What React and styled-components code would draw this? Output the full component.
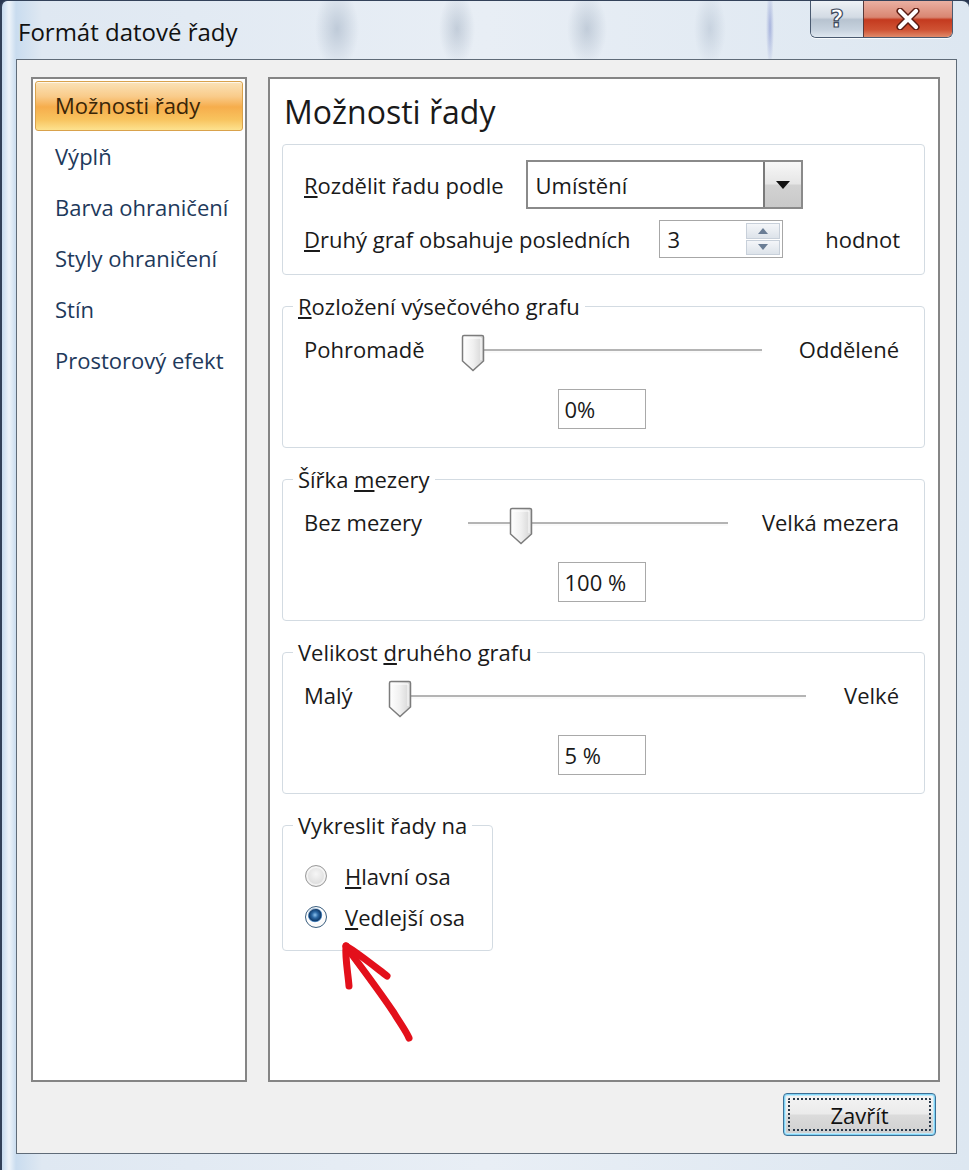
import React from 'react';
import styled, { createGlobalStyle } from 'styled-components';

const Global = createGlobalStyle`
  html, body { margin: 0; padding: 0; }
  body {
    width: 969px; height: 1170px; overflow: hidden;
    font-family: "Open Sans", "Noto Sans", "DejaVu Sans", sans-serif;
    background: #2a3852;
  }
  * { box-sizing: border-box; }
`;

const Window = styled.div`
  position: relative;
  width: 969px;
  height: 1170px;
  display: flex;
  flex-direction: column;
  padding: 0 12px 16px 14px;
  border-left: 2px solid #33425a;
  border-top: 1px solid #33425a;
  border-radius: 7px 7px 0 0;
  background:
    radial-gradient(ellipse 22px 40px at 335px 28px, rgba(120,140,165,.35), transparent),
    radial-gradient(ellipse 18px 36px at 455px 28px, rgba(110,130,155,.3), transparent),
    radial-gradient(ellipse 20px 36px at 585px 28px, rgba(110,130,155,.3), transparent),
    radial-gradient(ellipse 16px 36px at 708px 28px, rgba(120,140,165,.25), transparent),
    radial-gradient(ellipse 4px 40px at 768px 26px, rgba(60,80,180,.35), transparent),
    linear-gradient(90deg, #c7dbef 0, #eef4fa 7px, #c9dcef 14px, #dfe8f2 40px, #e8eef5 50%, #dde7f1 100%);
`;

const TitleBar = styled.div`
  height: 58px;
  display: flex;
  align-items: flex-start;
`;

const Title = styled.div`
  align-self: center;
  margin-left: 2px;
  margin-top: 2px;
  font-size: 24px;
  color: #111;
`;

const CaptionButtons = styled.div`
  margin-left: auto;
  margin-right: 4px;
  display: flex;
  height: 37px;
  border: 1px solid #4a5a70;
  border-top: none;
  border-radius: 0 0 6px 6px;
  overflow: hidden;
  box-shadow: 0 1px 0 rgba(255,255,255,.8);
`;

const CaptionButton = styled.div`
  width: ${p => p.$w}px;
  height: 100%;
  display: flex;
  align-items: center;
  justify-content: center;
  border-left: ${p => (p.$close ? '1px solid #5a3a3a' : 'none')};
  background: ${p =>
    p.$close
      ? 'linear-gradient(180deg, #eab0a2 0%, #d98672 45%, #c43a1f 52%, #cf5233 80%, #e08a6a 100%)'
      : 'linear-gradient(180deg, #eef2f6 0%, #d3dbe4 45%, #b7c3d0 52%, #c7d2de 80%, #dfe7ef 100%)'};
`;

const HelpGlyph = styled.span`
  font-family: "DejaVu Sans", sans-serif;
  font-weight: bold;
  font-size: 24px;
  line-height: 1;
  color: #fff;
  -webkit-text-stroke: 1.2px #3d4a5c;
`;

const Client = styled.div`
  flex: 1;
  display: flex;
  flex-direction: column;
  border: 1px solid #5f6b78;
  background: #f0f0f0;
  padding: 17px 16px 0 14px;
`;

const Panels = styled.div`
  height: 1005px;
  display: flex;
  gap: 21px;
`;

const Nav = styled.div`
  width: 216px;
  border: 2px solid #858585;
  background: #fff;
  padding: 2px;
  display: flex;
  flex-direction: column;
`;

const NavItem = styled.div`
  height: ${p => (p.$active ? 50 : 51)}px;
  margin-bottom: ${p => (p.$active ? 1 : 0)}px;
  display: flex;
  align-items: center;
  padding-left: 19px;
  padding-bottom: 3px;
  font-size: 22px;
  color: ${p => (p.$active ? '#3a2608' : '#1e395b')};
  border-radius: 3px;
  border: 1px solid ${p => (p.$active ? '#d9a24c' : 'transparent')};
  background: ${p =>
    p.$active
      ? 'linear-gradient(180deg, #fbe3b8 0%, #f9cb8a 30%, #f6ad4c 52%, #f8c35e 78%, #fde28f 100%)'
      : 'transparent'};
  box-shadow: ${p => (p.$active ? 'inset 0 1px 0 rgba(255,255,255,.7)' : 'none')};
`;

const Main = styled.div`
  position: relative;
  flex: 1;
  border: 2px solid #858585;
  background: #fff;
  padding: 13px 13px 0 12px;
  display: flex;
  flex-direction: column;
  gap: 18px;
`;

const Heading = styled.div`
  font-size: 32px;
  line-height: 40px;
  margin-left: 2px;
  margin-bottom: -6px;
  color: #1a1a1a;
`;

const Group = styled.fieldset`
  margin: 0;
  width: ${p => (p.$w ? `${p.$w}px` : 'auto')};
  min-width: 0;
  border: 1px solid #d3dbe2;
  border-radius: 4px;
  padding: ${p => (p.$plain ? '15px 23px 16px 21px' : '0 25px 18px 21px')};
  display: flex;
  flex-direction: column;
  color: #1a1a1a;
  font-size: 22px;
`;

const Legend = styled.legend`
  margin-left: -11px;
  padding: 0 5px;
  line-height: 26px;
  font-size: 22px;
  white-space: nowrap;
  color: #1a1a1a;
`;

const Row = styled.div`
  display: flex;
  align-items: center;
  height: ${p => p.$h || 40}px;
  margin-top: ${p => p.$mt || 0}px;
`;

const Label = styled.span`
  white-space: nowrap;
  line-height: 1;
`;

const Combo = styled.div`
  margin-left: 22px;
  width: 277px;
  height: 49px;
  border: 2px solid #8a8a8a;
  background: #fff;
  display: flex;
  align-items: stretch;
`;

const ComboText = styled.div`
  flex: 1;
  display: flex;
  align-items: center;
  padding-left: 8px;
`;

const ComboButton = styled.div`
  width: 38px;
  border-left: 2px solid #7a7a7a;
  background: linear-gradient(180deg, #f7f7f7 0%, #e6e6e6 48%, #d2d2d2 52%, #c9c9c9 100%);
  display: flex;
  align-items: center;
  justify-content: center;
`;

const Spin = styled.div`
  margin-left: 28px;
  width: 124px;
  height: 38px;
  border: 1px solid #a7a7a7;
  background: #fff;
  display: flex;
  padding: 2px;
`;

const SpinText = styled.div`
  flex: 1;
  display: flex;
  align-items: center;
  padding-left: 6px;
`;

const SpinButtons = styled.div`
  width: 34px;
  display: flex;
  flex-direction: column;
  gap: 1px;
`;

const SpinButton = styled.div`
  flex: 1;
  display: flex;
  align-items: center;
  justify-content: center;
  border: 1px solid #c8d0da;
  background: linear-gradient(180deg, #f4f6f9, #dde3ea);
`;

const Suffix = styled.span`
  margin-left: auto;
  margin-right: 1px;
`;

const Track = styled.div`
  position: relative;
  flex: 1;
  height: 4px;
  margin: 4px ${p => p.$r}px 0 ${p => p.$l}px;
  border-top: 2px solid #b4b4b4;
  border-bottom: 2px solid #fafafa;
  background: #d9d9d9;
`;

const Thumb = styled.svg`
  position: absolute;
  top: -17px;
  margin-left: -2px;
`;

const ValueBox = styled.div`
  align-self: center;
  margin-top: 20px;
  width: 88px;
  height: 40px;
  border: 1px solid #a9a9a9;
  display: flex;
  align-items: center;
  padding-left: 6px;
  font-size: 22px;
`;

const RadioRow = styled.div`
  display: flex;
  align-items: center;
  height: 30px;
  margin-top: ${p => p.$mt || 0}px;
  gap: 18px;
  margin-left: 1px;
`;

const RadioCircle = styled.span`
  width: 22px;
  height: 22px;
  border-radius: 50%;
  border: 1px solid ${p => (p.$on ? '#3b5f80' : '#9a9a9a')};
  background: ${p =>
    p.$on
      ? 'radial-gradient(circle at 45% 40%, #8ec3ee 0, #2d6aa6 3px, #0f3a6a 6px, #5b93c9 6.8px, #fff 7.6px, #e4e4e4 100%)'
      : 'radial-gradient(circle at 50% 40%, #f6f6f6 0, #dcdcdc 70%, #c9c9c9 100%)'};
  box-shadow: inset 0 0 0 2px rgba(255,255,255,.6);
  flex: none;
`;

const Footer = styled.div`
  display: flex;
  justify-content: flex-end;
  padding: 11px 4px 0 0;
`;

const Button = styled.button`
  width: 153px;
  height: 43px;
  border: 1px solid #3c6f95;
  border-radius: 4px;
  font-family: inherit;
  font-size: 22px;
  color: #111;
  background: linear-gradient(180deg, #f4f4f4 0%, #ebebeb 48%, #dbdbdb 52%, #cfcfcf 100%);
  box-shadow: inset 0 0 0 1px #7fd3f5, inset 0 0 0 2px #bfe9fa;
  position: relative;
  padding: 0;
  &::after {
    content: '';
    position: absolute;
    inset: 4px;
    border: 2px dotted #2a3a4a;
    border-radius: 2px;
  }
`;

const Arrow = styled.svg`
  position: absolute;
  left: 62px;
  top: 854px;
  overflow: visible;
`;

function SliderRow({ left, right, value, l, r }) {
  return (
    <Row $h={40} $mt={10}>
      <Label>{left}</Label>
      <Track $l={l} $r={r}>
        <Thumb width="24" height="38" viewBox="0 0 24 38" style={{ left: `${value}%` }}>
          <defs>
            <linearGradient id="tg" x1="0" x2="1" y1="0" y2="0">
              <stop offset="0" stopColor="#ffffff" />
              <stop offset="0.5" stopColor="#f0f0f0" />
              <stop offset="1" stopColor="#d4d4d4" />
            </linearGradient>
          </defs>
          <path d="M3 1.5 H21 Q22.5 1.5 22.5 3 V27 L12 36.5 L1.5 27 V3 Q1.5 1.5 3 1.5 Z" fill="url(#tg)" stroke="#7c7c7c" strokeWidth="1.5" />
          <path d="M4 4 H20 V26" fill="none" stroke="#fff" strokeWidth="1" />
        </Thumb>
      </Track>
      <Label>{right}</Label>
    </Row>
  );
}

export default function App() {
  return (
    <>
      <Global />
      <Window>
        <TitleBar>
          <Title>Formát datové řady</Title>
          <CaptionButtons>
            <CaptionButton $w={52}>
              <HelpGlyph>?</HelpGlyph>
            </CaptionButton>
            <CaptionButton $w={89} $close>
              <svg width="28" height="22" viewBox="0 0 28 22">
                <path d="M6 3 L22 19 M22 3 L6 19" stroke="#5a1a10" strokeWidth="7" strokeLinecap="round" />
                <path d="M6 3 L22 19 M22 3 L6 19" stroke="#fff" strokeWidth="4.2" strokeLinecap="round" />
              </svg>
            </CaptionButton>
          </CaptionButtons>
        </TitleBar>
        <Client>
          <Panels>
            <Nav>
              <NavItem $active>Možnosti řady</NavItem>
              <NavItem>Výplň</NavItem>
              <NavItem>Barva ohraničení</NavItem>
              <NavItem>Styly ohraničení</NavItem>
              <NavItem>Stín</NavItem>
              <NavItem>Prostorový efekt</NavItem>
            </Nav>
            <Main>
              <Heading>Možnosti řady</Heading>
              <Group $plain>
                <Row $h={49}>
                  <Label><u>R</u>ozdělit řadu podle</Label>
                  <Combo>
                    <ComboText>Umístění</ComboText>
                    <ComboButton>
                      <svg width="14" height="8" viewBox="0 0 14 8"><path d="M0 0 H14 L7 8 Z" fill="#111" /></svg>
                    </ComboButton>
                  </Combo>
                </Row>
                <Row $h={38} $mt={11}>
                  <Label><u>D</u>ruhý graf obsahuje posledních</Label>
                  <Spin>
                    <SpinText>3</SpinText>
                    <SpinButtons>
                      <SpinButton>
                        <svg width="10" height="6" viewBox="0 0 10 6"><path d="M0 6 L5 0 L10 6 Z" fill="#6a7d95" /></svg>
                      </SpinButton>
                      <SpinButton>
                        <svg width="10" height="6" viewBox="0 0 10 6"><path d="M0 0 L10 0 L5 6 Z" fill="#6a7d95" /></svg>
                      </SpinButton>
                    </SpinButtons>
                  </Spin>
                  <Suffix>hodnot</Suffix>
                </Row>
              </Group>
              <Group>
                <Legend><u>R</u>ozložení výsečového grafu</Legend>
                <SliderRow left="Pohromadě" right="Oddělené" value={0} l={38} r={37} />
                <ValueBox>0%</ValueBox>
              </Group>
              <Group>
                <Legend>Šířka <u>m</u>ezery</Legend>
                <SliderRow left="Bez mezery" right="Velká mezera" value={16.5} l={46} r={34} />
                <ValueBox>100 %</ValueBox>
              </Group>
              <Group>
                <Legend>Velikost <u>d</u>ruhého grafu</Legend>
                <SliderRow left="Malý" right="Velké" value={0} l={37} r={38} />
                <ValueBox>5 %</ValueBox>
              </Group>
              <Group $w={211}>
                <Legend>Vykreslit řady na</Legend>
                <RadioRow $mt={23}>
                  <RadioCircle />
                  <Label><u>H</u>lavní osa</Label>
                </RadioRow>
                <RadioRow $mt={11}>
                  <RadioCircle $on />
                  <Label><u>V</u>edlejší osa</Label>
                </RadioRow>
              </Group>
              <Arrow width="90" height="115" viewBox="0 0 90 115">
                <g fill="none" stroke="#e3101b" strokeWidth="7" strokeLinecap="round" strokeLinejoin="round">
                  <path d="M14 13 C 13 25, 16 40, 17 53" />
                  <path d="M14 13 C 26 20, 42 33, 55 43" />
                  <path d="M15 15 C 30 35, 50 62, 62 80 C 68 90, 74 98, 77 105" />
                  <path d="M18 20 C 32 40, 48 60, 60 76" strokeWidth="4" />
                </g>
              </Arrow>
            </Main>
          </Panels>
          <Footer>
            <Button>Zavřít</Button>
          </Footer>
        </Client>
      </Window>
    </>
  );
}
